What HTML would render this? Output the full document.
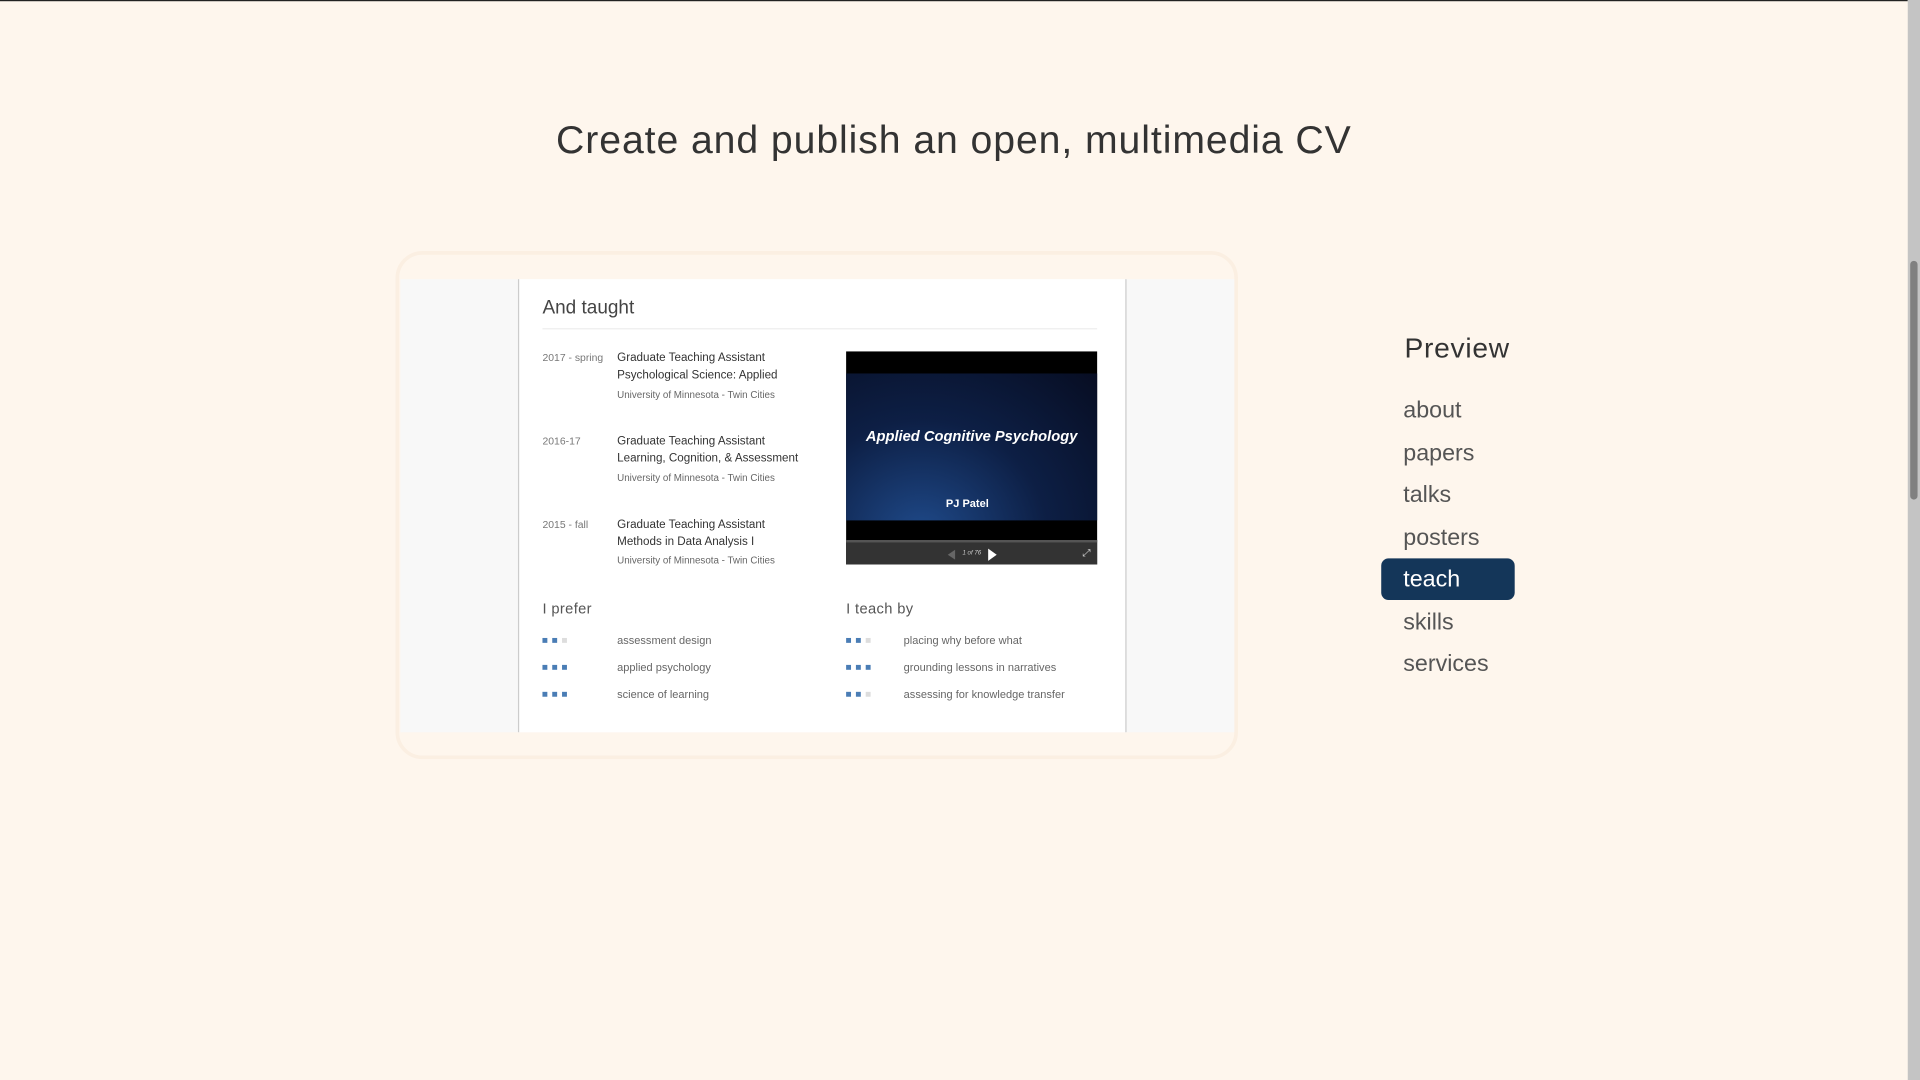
<!DOCTYPE html>
<html><head><meta charset="utf-8"><style>
html,body{margin:0;padding:0;width:1920px;height:1080px;overflow:hidden;background:#fef6ed;}
#w{position:absolute;left:0;top:0;width:1568px;height:882px;transform:scale(1.22449);transform-origin:0 0;font-family:"Liberation Sans",sans-serif;}
.a{position:absolute;white-space:nowrap;}
.t{font-size:9.5px;color:#333;line-height:14px}
.u{font-size:8px;color:#666}
.d{font-size:8.5px;color:#777}
.sk{font-size:9px;color:#666}
.sq{position:absolute;width:4px;height:4px;}
.nav{position:absolute;left:1146px;font-size:19px;color:#555;}
</style></head><body><div id="w">
<div class="a" style="left:0;top:0;width:1558px;height:1px;background:#222"></div>
<div class="a" style="left:1558px;top:0;width:10px;height:882px;background:#c4c4c4"></div>
<div class="a" style="left:1560px;top:213px;width:6px;height:195px;background:#808080;border-radius:3px"></div>
<div class="a" style="left:0;width:1558px;top:96px;text-align:center;font-size:32px;color:#333;letter-spacing:0.75px">Create and publish an open, multimedia CV</div>
<div class="a" style="left:323px;top:205px;width:682px;height:409px;border:3px solid #fbefe2;border-radius:22px;background:#fef6ed"></div>
<div class="a" style="left:327px;top:228px;width:681px;height:370px;background:#f8f8f8"></div>
<div class="a" style="left:423px;top:228px;width:495px;height:370px;background:#fff;border-left:1.5px solid #ccc;border-right:1.5px solid #ccc"></div>
<div class="a" style="left:443px;top:243px;font-size:15.5px;color:#444">And taught</div>
<div class="a" style="left:443px;top:268px;width:453px;height:1px;background:#eee"></div>

<div class="a d" style="left:443px;top:287px">2017 - spring</div>
<div class="a t" style="left:504px;top:286px">Graduate Teaching Assistant<br>Psychological Science: Applied</div>
<div class="a u" style="left:504px;top:318px">University of Minnesota - Twin Cities</div>
<div class="a d" style="left:443px;top:355px">2016-17</div>
<div class="a t" style="left:504px;top:354px">Graduate Teaching Assistant<br>Learning, Cognition, &amp; Assessment</div>
<div class="a u" style="left:504px;top:386px">University of Minnesota - Twin Cities</div>
<div class="a d" style="left:443px;top:423px">2015 - fall</div>
<div class="a t" style="left:504px;top:422px">Graduate Teaching Assistant<br>Methods in Data Analysis I</div>
<div class="a u" style="left:504px;top:453px">University of Minnesota - Twin Cities</div>

<div class="a" style="left:691px;top:287px;width:205px;height:174px;background:#000">
 <div class="a" style="left:0;top:18px;width:205px;height:120px;background:radial-gradient(ellipse at 30% 110%,#1f4a8a 0%,#0d1f45 50%,#070d22 100%)"></div>
 <div class="a" style="left:0;top:62px;width:205px;text-align:center;color:#fff;font-style:italic;font-weight:bold;font-size:12px">Applied Cognitive Psychology</div>
 <div class="a" style="left:0;top:119px;width:198px;text-align:center;color:#fff;font-weight:bold;font-size:9px">PJ Patel</div>
 <div class="a" style="left:0;top:154px;width:205px;height:20px;background:#333;border-top:2px solid #555;box-sizing:border-box"></div>
 <div class="a" style="left:83px;top:162px;width:0;height:0;border-top:4px solid transparent;border-bottom:4px solid transparent;border-right:6px solid #666"></div>
 <div class="a" style="left:95px;top:162px;font-size:5px;color:#ccc;font-style:italic">1 of 76</div>
 <div class="a" style="left:116px;top:161px;width:0;height:0;border-top:5px solid transparent;border-bottom:5px solid transparent;border-left:7px solid #fff"></div>
 <div class="a" style="left:193px;top:160px;font-size:8px;color:#ddd">⤢</div>
</div>

<div class="a" style="left:443px;top:490px;font-size:12px;color:#555;letter-spacing:.3px">I prefer</div>
<div class="a" style="left:691px;top:490px;font-size:12px;color:#555;letter-spacing:.3px">I teach by</div>
<div class="a sk" style="left:504px;top:518px">assessment design</div>
<div class="a sk" style="left:504px;top:540px">applied psychology</div>
<div class="a sk" style="left:504px;top:562px">science of learning</div>
<div class="a sk" style="left:738px;top:518px">placing why before what</div>
<div class="a sk" style="left:738px;top:540px">grounding lessons in narratives</div>
<div class="a sk" style="left:738px;top:562px">assessing for knowledge transfer</div>
<div class="sq" style="left:443px;top:521px;background:#4a7db5"></div><div class="sq" style="left:451px;top:521px;background:#4a7db5"></div><div class="sq" style="left:459px;top:521px;background:#ddd"></div>
<div class="sq" style="left:443px;top:543px;background:#4a7db5"></div><div class="sq" style="left:451px;top:543px;background:#4a7db5"></div><div class="sq" style="left:459px;top:543px;background:#4a7db5"></div>
<div class="sq" style="left:443px;top:565px;background:#4a7db5"></div><div class="sq" style="left:451px;top:565px;background:#4a7db5"></div><div class="sq" style="left:459px;top:565px;background:#4a7db5"></div>
<div class="sq" style="left:691px;top:521px;background:#4a7db5"></div><div class="sq" style="left:699px;top:521px;background:#4a7db5"></div><div class="sq" style="left:707px;top:521px;background:#ddd"></div>
<div class="sq" style="left:691px;top:543px;background:#4a7db5"></div><div class="sq" style="left:699px;top:543px;background:#4a7db5"></div><div class="sq" style="left:707px;top:543px;background:#4a7db5"></div>
<div class="sq" style="left:691px;top:565px;background:#4a7db5"></div><div class="sq" style="left:699px;top:565px;background:#4a7db5"></div><div class="sq" style="left:707px;top:565px;background:#ddd"></div>

<div class="a" style="left:1147px;top:271px;font-size:23px;color:#333;letter-spacing:.6px">Preview</div>
<div class="a" style="left:1128px;top:456px;width:109px;height:34px;background:#143659;border-radius:6px"></div>
<div class="nav" style="top:325px">about</div>
<div class="nav" style="top:360px">papers</div>
<div class="nav" style="top:394px">talks</div>
<div class="nav" style="top:429px">posters</div>
<div class="nav" style="top:463px;color:#fff">teach</div>
<div class="nav" style="top:498px">skills</div>
<div class="nav" style="top:532px">services</div>
</div></body></html>
